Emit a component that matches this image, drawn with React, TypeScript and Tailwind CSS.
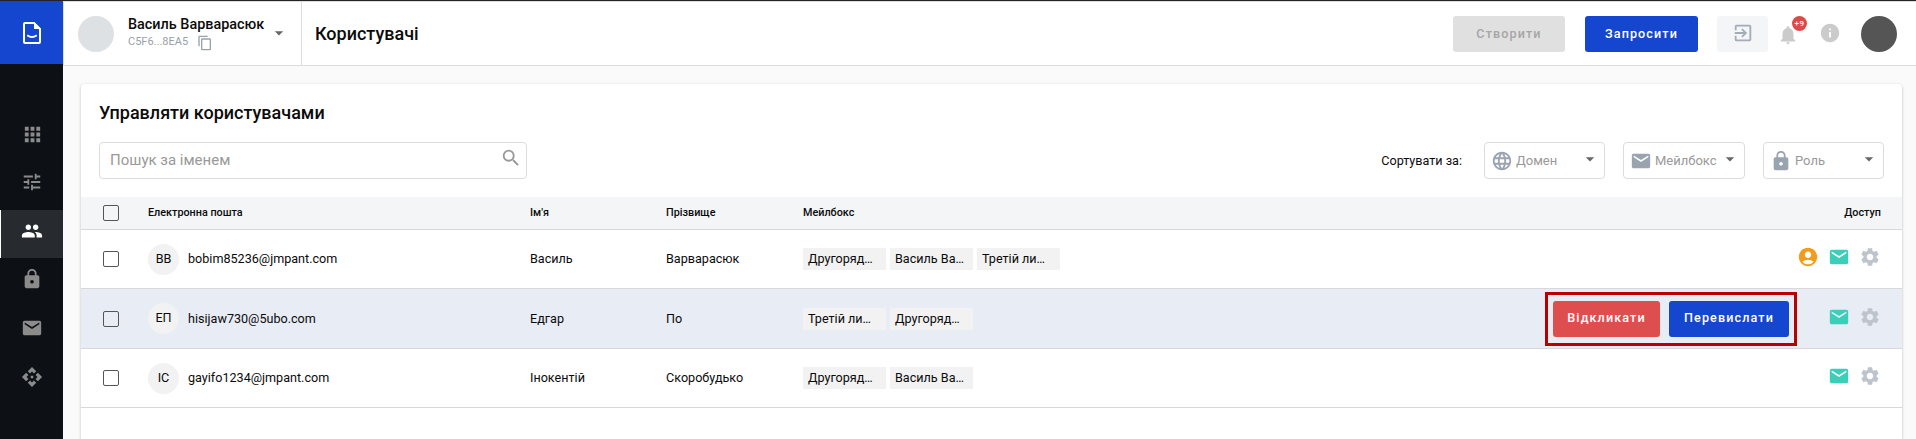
import type { ReactNode } from "react";
import {
  MdAccountCircle, MdApi, MdApps, MdArrowDropDown, MdContentCopy, MdEmail, MdExitToApp,
  MdInfo, MdLanguage, MdLock, MdNotifications, MdPeople, MdSearch, MdSettings, MdTune,
} from "react-icons/md";

type User = {
  initials: string;
  email: string;
  name: string;
  surname: string;
  boxes: string[];
  owner?: boolean;
  pending?: boolean;
};

const users: User[] = [
  { initials: "ВВ", email: "bobim85236@jmpant.com", name: "Василь", surname: "Варварасюк", boxes: ["Другоряд…", "Василь Ва…", "Третій ли…"], owner: true },
  { initials: "ЕП", email: "hisijaw730@5ubo.com", name: "Едгар", surname: "По", boxes: ["Третій ли…", "Другоряд…"], pending: true },
  { initials: "ІС", email: "gayifo1234@jmpant.com", name: "Інокентій", surname: "Скоробудько", boxes: ["Другоряд…", "Василь Ва…"] },
];

function Checkbox() {
  return <span className="block size-4 shrink-0 rounded-[2px] border border-[#555]" />;
}

function Sidebar() {
  return (
    <nav className="flex w-[63px] shrink-0 flex-col bg-[#0d1115] text-[#8b8b8b]">
      <div className="flex h-[63px] items-center justify-center bg-[#1546cf]">
        <svg width="18" height="22" viewBox="0 0 18 22" fill="none" stroke="white" strokeWidth="2" className="ml-px">
          <path d="M2 1H11L17 7V20a1 1 0 0 1-1 1H2a1 1 0 0 1-1-1V2a1 1 0 0 1 1-1Z" />
          <path d="M11 0V7H18Z" fill="white" stroke="none" />
          <path d="M4.2 13.2Q9 16.8 13.8 13.2" strokeWidth="1.8" />
        </svg>
      </div>
      <div className="mt-[46px] flex h-12 items-center justify-center pl-px"><MdApps size={23} /></div>
      <div className="flex h-[52px] items-center justify-center pb-1 pl-px"><MdTune size={22} /></div>
      <div className="flex h-12 items-center justify-center border-l border-white bg-[#272b2f] pb-[6px] text-white"><MdPeople size={22} /></div>
      <div className="flex h-[42px] items-center justify-center pl-px"><MdLock size={22} /></div>
      <div className="mt-[7px] flex h-[42px] items-center justify-center pl-px"><MdEmail size={22} /></div>
      <div className="mt-[7px] flex h-[42px] items-center justify-center pl-px"><MdApi size={22} /></div>
    </nav>
  );
}

function Header() {
  return (
    <header className="flex h-[65px] shrink-0 border-b border-l border-t border-[#dcdcdc] bg-white">
      <div className="flex w-[238px] border-r border-[#dcdcdc] pl-[14px] pt-[14px]">
        <div className="size-9 rounded-full bg-[#dde1e4]" />
        <div className="ml-[14px] w-[137px]">
          <div className="h-[18px] whitespace-nowrap text-[14.4px] font-medium leading-[17px]">Василь Варварасюк</div>
          <div className="flex h-[18px] items-center gap-[9px] text-[11px] text-[#9aa1a9]">
            <span className="-mt-px">C5F6...8EA5</span>
            <MdContentCopy size={16} />
          </div>
        </div>
        <MdArrowDropDown size={20} className="mt-[7px] ml-1 text-[#666]" />
      </div>
      <h1 className="pl-[13px] text-[18px] font-medium leading-[63px]">Користувачі</h1>
      <div className="ml-auto flex pr-[19px] pt-[14px]">
        <button className="h-9 w-28 rounded-[3px] bg-[#e0e0e0] text-[12.6px] font-medium tracking-[1.1px] text-[#a6a6a6]">Створити</button>
        <button className="ml-5 h-9 w-[113px] rounded-[3px] bg-[#1546cf] text-[12.6px] font-medium tracking-[1.1px] text-white">Запросити</button>
        <div className="ml-[19px] flex h-9 w-[51px] items-center justify-center rounded-[3px] bg-[#f3f5f7] pb-0.5 text-[#a3acb7]"><MdExitToApp size={22} /></div>
        <div className="relative ml-[9px] mt-2 text-[#cbcbcb]">
          <MdNotifications size={22} />
          <span className="absolute -top-2 left-[15px] flex size-[15px] items-center justify-center rounded-full bg-[#e04848] text-[8px] font-medium tracking-[0.5px] text-white">+9</span>
        </div>
        <MdInfo size={22} className="ml-5 mt-[6px] text-[#cbcbcb]" />
        <div className="ml-5 size-9 rounded-full bg-[#555]" />
      </div>
    </header>
  );
}

function Filter({ icon, label, className }: { icon: ReactNode; label: string; className: string }) {
  return (
    <div className={`flex h-[37px] items-center rounded-[4px] border border-[#dcdcdc] text-[#999] ${className}`}>
      <span className="ml-[6px] w-[25px] text-[#9aa3b0]">{icon}</span>
      <span className="mt-px text-[13px]">{label}</span>
      <MdArrowDropDown size={20} className="ml-auto mr-1 -mt-[3px] text-[#666]" />
    </div>
  );
}

function UserRow({ user }: { user: User }) {
  return (
    <div className={`flex items-center border-b border-[#d6d8db] pl-[22px] pr-[21px] text-[12.6px] ${user.pending ? "h-[60px] bg-[#e7ecf5]" : "h-[59px]"}`}>
      <Checkbox />
      <div className="ml-[29px] flex w-[382px] items-center">
        <span className="flex size-[31px] items-center justify-center rounded-full bg-[#f2f2f2]">{user.initials}</span>
        <span className="ml-[9px] mt-px">{user.email}</span>
      </div>
      <span className="mt-px w-[136px]">{user.name}</span>
      <span className="mt-px w-[137px]">{user.surname}</span>
      <div className="flex gap-1">
        {user.boxes.map((box) => (
          <span key={box} className="h-[22px] w-[83px] bg-[#f2f2f2] pl-[5px] leading-[21px]">{box}</span>
        ))}
      </div>
      <div className="ml-auto flex items-center">
        {user.pending && (
          <div className="mr-[31px] flex h-[54px] w-[252px] items-center justify-center gap-[9px] border-[3px] border-[#b90000] font-medium tracking-[1.1px] text-white">
            <button className="h-9 w-[107px] rounded-[3px] bg-[#df4e4e]">Відкликати</button>
            <button className="h-9 w-[120px] rounded-[3px] bg-[#1546cf]">Перевислати</button>
          </div>
        )}
        <div className="flex items-center gap-[9px] pb-1">
          {user.owner && <MdAccountCircle size={22} className="text-[#f39c1b]" />}
          <MdEmail size={22} className="text-[#3bcfba]" />
          <MdSettings size={22} className="text-[#bdc4cc]" />
        </div>
      </div>
    </div>
  );
}

export default function App() {
  return (
    <div className="flex h-[439px] w-[1916px] flex-col overflow-hidden bg-[#fafafa] font-[Roboto,sans-serif] text-[#0b0b0b]">
      <div className="h-px shrink-0 bg-[#242428]" />
      <div className="flex min-h-0 flex-1">
        <Sidebar />
        <div className="flex min-w-0 flex-1 flex-col">
          <Header />
          <main className="ml-[18px] mr-[14px] mt-[18px] flex-1 rounded-t-[4px] bg-white shadow-[0_1px_3px_rgba(0,0,0,0.25)]">
            <div className="h-[113px] px-[18px] pt-[17px]">
              <h2 className="text-[18px] font-medium leading-6">Управляти користувачами</h2>
              <div className="mt-[17px] flex items-center">
                <div className="flex h-[37px] w-[428px] items-center rounded-[4px] border border-[#dcdcdc] pl-[10px] pr-1 text-[15px] text-[#999]">
                  Пошук за іменем
                  <MdSearch size={22} className="ml-auto -mt-[5px]" />
                </div>
                <span className="ml-auto mr-[22px] mt-px text-[12.6px]">Сортувати за:</span>
                <Filter className="w-[121px]" icon={<MdLanguage size={22} />} label="Домен" />
                <Filter className="ml-[18px] w-[122px]" icon={<MdEmail size={22} />} label="Мейлбокс" />
                <Filter className="ml-[18px] w-[121px]" icon={<MdLock size={22} />} label="Роль" />
              </div>
            </div>
            <div className="flex h-[33px] items-center border-b border-[#d6d8db] bg-[#f3f5f7] pl-[22px] pr-[21px] text-[10.8px] font-medium">
              <Checkbox />
              <span className="ml-[29px] w-[382px]">Електронна пошта</span>
              <span className="w-[136px]">Ім'я</span>
              <span className="w-[137px]">Прізвище</span>
              <span>Мейлбокс</span>
              <span className="ml-auto">Доступ</span>
            </div>
            {users.map((user) => <UserRow key={user.email} user={user} />)}
          </main>
        </div>
      </div>
    </div>
  );
}
